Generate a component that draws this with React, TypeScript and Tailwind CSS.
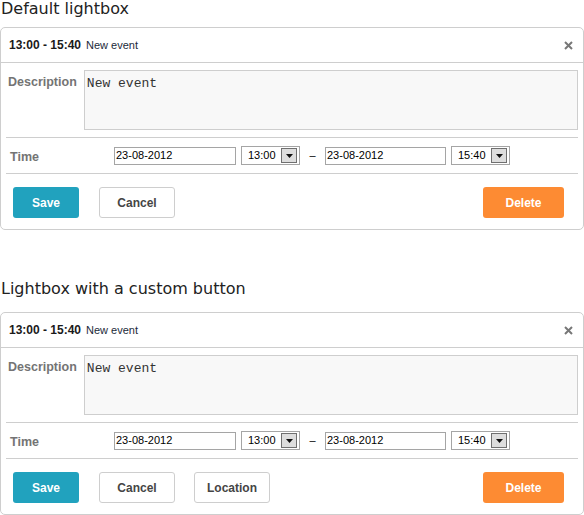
import React from 'react';

const tahoma = { fontFamily: '"Liberation Sans", Arial, sans-serif' };
const verdana = { fontFamily: '"DejaVu Sans", Verdana, sans-serif' };

const Select: React.FC<{ value: string }> = ({ value }) => (
  <div className="flex items-center w-[59px] h-[19px] border border-[#a5a5a5] bg-white pl-[6px] pr-[2px]">
    <span className="text-[11px] text-black flex-1 leading-none">{value}</span>
    <div className="w-[16px] h-[15px] border border-[#707070] bg-[#dedede] flex items-center justify-center">
      <svg width="7" height="4" viewBox="0 0 7 4">
        <path d="M0 0h7L3.5 4z" fill="#111" />
      </svg>
    </div>
  </div>
);

const DateInput: React.FC<{ value: string; width: string }> = ({ value, width }) => (
  <div className={`${width} h-[18px] border border-[#a5a5a5] bg-white flex items-center pl-[1px]`}>
    <span className="text-[11px] text-black leading-none">{value}</span>
  </div>
);

const Lightbox: React.FC<{ custom?: boolean }> = ({ custom }) => (
  <div className="w-[584px] border border-[#cecece] rounded-[5px] bg-white" style={tahoma}>
    {/* header */}
    <div className="h-[35px] border-b border-[#cecece] flex items-center pl-[8px] pr-[10px]">
      <span className="text-[12px] font-bold text-[#1a1a1a]">13:00 - 15:40</span>
      <span className="text-[11px] text-[#1b2a3a] ml-[5px]">New event</span>
      <div className="ml-auto">
        <svg width="9" height="9" viewBox="0 0 9 9">
          <path d="M1 1l7 7M8 1l-7 7" stroke="#777" strokeWidth="2" />
        </svg>
      </div>
    </div>

    {/* description */}
    <div className="mx-[5px] border-b border-[#cecece] h-[75px] flex pt-[7px]">
      <div className="w-[78px] pl-[2px] pt-[6px] text-[12.5px] font-bold text-[#747474] leading-none">Description</div>
      <div
        className="w-[495px] h-[60px] border border-[#cecece] bg-[#f8f8f8] px-[2px] pt-[6px] text-[13px] leading-[13px] text-[#333]"
        style={{ fontFamily: '"Liberation Mono", "Courier New", monospace' }}
      >
        New event
      </div>
    </div>

    {/* time */}
    <div className="mx-[5px] border-b border-[#cecece] h-[36px] flex items-center">
      <div className="w-[108px] pl-[4px] pt-[3px] text-[12.5px] font-bold text-[#747474]">Time</div>
      <DateInput value="23-08-2012" width="w-[122px]" />
      <div className="ml-[5px]"><Select value="13:00" /></div>
      <span className="w-[25px] text-center text-[11px] text-black">–</span>
      <DateInput value="23-08-2012" width="w-[121px]" />
      <div className="ml-[5px]"><Select value="15:40" /></div>
    </div>

    {/* buttons */}
    <div className="h-[55px] flex items-start pt-[13px] pl-[12px]">
      <button className="w-[66px] h-[31px] rounded-[3px] bg-[#21a2be] text-white text-[12px] font-bold">Save</button>
      <button className="ml-[20px] w-[76px] h-[31px] rounded-[3px] border border-[#cecece] bg-white text-[#454545] text-[12px] font-bold">Cancel</button>
      {custom && (
        <button className="ml-[19px] w-[76px] h-[31px] rounded-[3px] border border-[#cecece] bg-white text-[#454545] text-[12px] font-bold">Location</button>
      )}
      <button className="ml-auto mr-[19px] w-[81px] h-[31px] rounded-[3px] bg-[#fd8b33] text-white text-[12px] font-bold">Delete</button>
    </div>
  </div>
);

export default function App() {
  return (
    <div className="w-[584px] h-[515px] bg-white overflow-hidden">
      <div className="h-[27px] pl-[1px] text-[16px] text-[#222] leading-[18px]" style={verdana}>
        Default lightbox
      </div>
      <Lightbox />
      <div className="h-[82px] pl-[1px] pt-[50px] text-[16px] text-[#222] leading-[18px]" style={verdana}>
        Lightbox with a custom button
      </div>
      <Lightbox custom />
    </div>
  );
}
